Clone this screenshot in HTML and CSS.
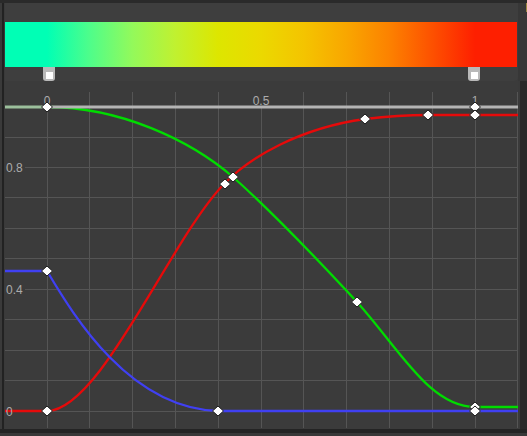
FILE: index.html
```html
<!DOCTYPE html>
<html>
<head>
<meta charset="utf-8">
<link rel="stylesheet" href="styles.css">
</head>
<body>
<div class="topbar"></div>
<div class="app">
  <div class="gutter-left"><div class="rule"></div></div>
  <div class="main">
    <div class="gradient-panel">
      <div class="gradient"></div>
      <div class="stops">
        <div class="stop" style="left:38px"><span class="stop-dot"></span></div>
        <div class="stop" style="left:463px"><span class="stop-dot"></span></div>
      </div>
    </div>
    <svg class="graph" width="513" height="348" viewBox="5 81 513 348" xmlns="http://www.w3.org/2000/svg">
      <g class="grid">
        <path d="M47.5,92V428M89.5,92V428M132.5,92V428M175.5,92V428M218.5,92V428M261.5,92V428M303.5,92V428M346.5,92V428M389.5,92V428M432.5,92V428M475.5,92V428M517.5,92V428"/>
        <path d="M5,137.5H518M5,167.5H518M5,197.5H518M5,228.5H518M5,258.5H518M5,289.5H518M5,319.5H518M5,350.5H518M5,380.5H518M5,411.5H518"/>
      </g>
      <g class="label-bg">
        <rect x="5" y="160" width="20" height="14"/>
        <rect x="5" y="282" width="20" height="14"/>
        <rect x="41" y="92" width="12" height="14"/>
        <rect x="252" y="92" width="19" height="14"/>
        <rect x="469" y="92" width="12" height="14"/>
      </g>
      <path class="curve red" d="M5,411H47C100,411 170,240 224,184C250,157 300,128 365,119C390,116 410,115 428,115H518"/>
      <path class="curve blue" d="M5,271H47C75,318 130,408 218,411H518"/>
      <path class="curve green" d="M47,107C120,107 190,140 233,177C270,210 320,262 357,302C400,350 430,407 475,407H518"/>
      <g class="labels">
        <text x="47" y="105" text-anchor="middle">0</text>
        <text x="261" y="105" text-anchor="middle">0.5</text>
        <text x="475" y="105" text-anchor="middle">1</text>
        <text x="6" y="172">0.8</text>
        <text x="6" y="294">0.4</text>
        <text x="6" y="416">0</text>
      </g>
      <path class="alpha-tint" d="M5,107H47"/>
      <path class="alpha" d="M47,107H518"/>
      <g class="keys">
        <polygon points="47,102 52.5,107 47,112 41.5,107"/>
        <polygon points="225,179 230.5,184 225,189 219.5,184"/>
        <polygon points="233,172 238.5,177 233,182 227.5,177"/>
        <polygon points="365,114 370.5,119 365,124 359.5,119"/>
        <polygon points="428,110 433.5,115 428,120 422.5,115"/>
        <polygon points="475,102 480.5,107 475,112 469.5,107"/>
        <polygon points="475,110 480.5,115 475,120 469.5,115"/>
        <polygon points="357,297 362.5,302 357,307 351.5,302"/>
        <polygon points="47,266 52.5,271 47,276 41.5,271"/>
        <polygon points="218,406 223.5,411 218,416 212.5,411"/>
        <polygon points="47,406 52.5,411 47,416 41.5,411"/>
        <polygon points="475,402 480.5,407 475,412 469.5,407"/>
        <polygon points="475,406 480.5,411 475,416 469.5,411"/>
      </g>
    </svg>
  </div>
  <div class="gutter-right">
    <div class="gutter-right-top"><span class="gold"></span></div>
    <div class="gutter-right-bottom"></div>
  </div>
</div>
<div class="bottombar"></div>
</body>
</html>
```
FILE: styles.css
```css
html, body {
  margin: 0;
  padding: 0;
}
body {
  width: 527px;
  height: 436px;
  overflow: hidden;
  background: #2b2b2b;
  font-family: "Liberation Sans", Arial, sans-serif;
}
.topbar {
  height: 3px;
  background: #2a2a2a;
}
.app {
  display: flex;
  height: 426px;
}
.gutter-left {
  width: 2px;
  padding: 0 1px 0 2px;
  background: #3a3a3a;
  display: flex;
}
.rule {
  width: 2px;
  background: #222222;
}
.main {
  width: 513px;
  display: flex;
  flex-direction: column;
  background: #3b3b3b;
}
.gradient-panel {
  height: 59px;
  padding-top: 19px;
  background: #3e3e3e;
  border-bottom-right-radius: 4px;
}
.gradient {
  width: 512px;
  height: 45px;
  background: linear-gradient(to right,
    #00ffb5 0%, #00ffb5 8.2%,
    #4ffd8a 16.6%, #94f95a 25%, #c0f130 33.2%, #dde600 41.6%,
    #ebd900 50%, #f4c400 58.4%, #f9a600 66.8%, #fc8200 75%,
    #fd5100 83.4%, #fe1f00 91.8%, #fe1f00 100%);
}
.stops {
  position: relative;
  height: 14px;
}
.stop {
  position: absolute;
  top: 0;
  width: 12px;
  height: 14px;
  background: #b9b9b9;
  border-radius: 0 0 3px 3px;
  display: flex;
  justify-content: center;
  align-items: flex-end;
  box-sizing: border-box;
  padding-bottom: 2px;
}
.stop-dot {
  width: 7px;
  height: 7px;
  background: #ffffff;
}
.graph {
  display: block;
  background: #3b3b3b;
}
.grid path {
  stroke: #555555;
  stroke-width: 1;
  fill: none;
}
.label-bg rect {
  fill: #3b3b3b;
}
.curve {
  fill: none;
  stroke-width: 2.3;
  stroke-linejoin: round;
}
.red { stroke: #e60a0a; }
.green { stroke: #00dc00; }
.blue { stroke: #4040f2; }
.alpha {
  stroke: #b4b4b4;
  stroke-width: 3;
}
.alpha-tint {
  stroke: #9cc09c;
  stroke-width: 3;
}
.labels text {
  font-family: "Liberation Sans", Arial, sans-serif;
  font-size: 12px;
  fill: #ababab;
}
.keys polygon {
  fill: #ffffff;
  stroke: #1c1c1c;
  stroke-width: 1;
}
.gutter-right {
  width: 9px;
  display: flex;
  flex-direction: column;
}
.gutter-right-top {
  height: 78px;
  background: #373737;
  display: flex;
  justify-content: flex-end;
  align-items: flex-start;
}
.gold {
  width: 1px;
  height: 9px;
  background: #9a8540;
}
.gutter-right-bottom {
  flex: 1;
  background: #292929;
  border-left: 2px solid #3a3a3a;
}
.bottombar {
  height: 4px;
  background: #242424;
  border-bottom: 3px solid #383838;
}
```
